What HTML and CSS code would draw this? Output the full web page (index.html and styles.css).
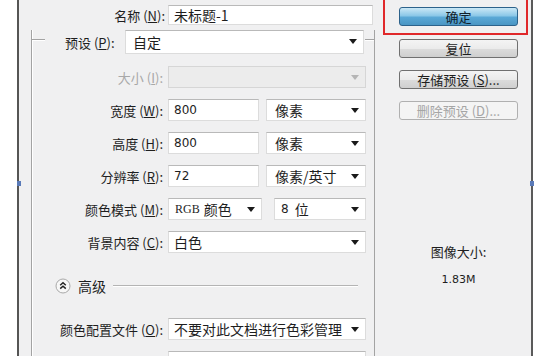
FILE: index.html
```html
<!DOCTYPE html>
<html lang="zh-CN">
<head>
  <meta charset="UTF-8">
  <title>新建</title>
  <link rel="stylesheet" href="styles.css">
</head>
<body>

  <div class="dialog">
    <span class="handle handle-left"></span>
    <span class="handle handle-right"></span>

    <div class="main">
      <div class="name-row">
        <label class="lbl name-lbl">名称 (<u>N</u>):</label>
        <div class="field name-field">未标题-1</div>
      </div>

      <div class="group">
        <div class="group-head">
          <span class="edge edge-left"></span>
          <label class="lbl preset-lbl">预设 (<u>P</u>):</label>
          <div class="field select preset-field">自定<i class="arrow"></i></div>
          <span class="edge edge-right"></span>
        </div>

        <div class="grid">
          <label class="lbl off">大小 (<u>I</u>):</label>
          <div class="field select disabled"><i class="arrow"></i></div>

          <label class="lbl">宽度 (<u>W</u>):</label>
          <div class="pair">
            <div class="field num">800</div>
            <div class="field select unit">像素<i class="arrow"></i></div>
          </div>

          <label class="lbl">高度 (<u>H</u>):</label>
          <div class="pair">
            <div class="field num">800</div>
            <div class="field select unit">像素<i class="arrow"></i></div>
          </div>

          <label class="lbl">分辨率 (<u>R</u>):</label>
          <div class="pair">
            <div class="field num">72</div>
            <div class="field select unit">像素/英寸<i class="arrow"></i></div>
          </div>

          <label class="lbl">颜色模式 (<u>M</u>):</label>
          <div class="pair">
            <div class="field select mode"><span class="rgb">RGB</span> 颜色<i class="arrow"></i></div>
            <div class="field select bits"><span class="digit">8</span> 位<i class="arrow"></i></div>
          </div>

          <label class="lbl">背景内容 (<u>C</u>):</label>
          <div class="field select">白色<i class="arrow"></i></div>
        </div>

        <div class="advanced">
          <svg class="toggle" width="16" height="16" viewBox="0 0 16 16">
            <circle cx="8" cy="8" r="7" fill="#f7f7f7" stroke="#a9a9a9"/>
            <path d="M5.2 7.2 L8 4.8 L10.8 7.2 M5.2 10.6 L8 8.2 L10.8 10.6" fill="none" stroke="#222" stroke-width="1.5"/>
          </svg>
          <span class="adv-text">高级</span>
          <span class="rule"></span>
        </div>

        <div class="grid">
          <label class="lbl">颜色配置文件 (<u>O</u>):</label>
          <div class="field select">不要对此文档进行色彩管理<i class="arrow"></i></div>

          <label class="lbl">像素长宽比 (<u>X</u>):</label>
          <div class="field select">方形像素<i class="arrow"></i></div>
        </div>
      </div>
    </div>

    <div class="side">
      <div class="highlight">
        <button class="btn btn-default">确定</button>
      </div>
      <button class="btn btn-reset">复位</button>
      <button class="btn">存储预设 (<u>S</u>)...</button>
      <button class="btn" disabled>删除预设 (<u>D</u>)...</button>

      <div class="size-info">
        <p class="size-title">图像大小:</p>
        <p class="size-value">1.83M</p>
      </div>
    </div>
  </div>

</body>
</html>
```

FILE: styles.css
```css
* {
  margin: 0;
  padding: 0;
  box-sizing: border-box;
}

body {
  width: 544px;
  height: 356px;
  overflow: hidden;
  background: #fff;
  font-family: "Noto Sans CJK SC", "Noto Sans", sans-serif;
  font-size: 13px;
  color: #1e1e1e;
}

u {
  text-decoration: underline;
  text-underline-offset: 1px;
}

.dialog {
  position: relative;
  display: flex;
  margin-left: 17px;
  width: 516px;
  height: 380px;
  background: #f0f0f1;
  border-left: 2px solid #555;
  border-right: 2px solid #5a5a5a;
}

/* selection handles on the frame */
.handle {
  position: absolute;
  top: 181px;
  width: 4px;
  height: 5px;
  background: #5a7ab8;
}

.handle-left { left: -2px; }
.handle-right { right: -3px; }

.main {
  width: 364px;
  padding: 5px 0 0 12px;
}

.lbl {
  white-space: nowrap;
  line-height: 1;
}

.lbl.off {
  color: #a8a8a8;
}

.field {
  position: relative;
  display: flex;
  align-items: center;
  height: 22px;
  padding-left: 5px;
  background: #fff;
  border: 1px solid #dcdcdc;
  border-top-color: #b9b9b9;
  font-size: 14px;
  white-space: nowrap;
}

.field.num {
  width: 91px;
  font-family: "DejaVu Sans", sans-serif;
  font-size: 12px;
}

.select {
  padding-right: 20px;
}

.arrow {
  position: absolute;
  right: 6px;
  top: 8px;
  width: 0;
  height: 0;
  border-left: 4px solid transparent;
  border-right: 4px solid transparent;
  border-top: 5px solid #1a1a1a;
}

.select.disabled {
  background: #ececec;
  border-color: #d6d6d6;
}

.select.disabled .arrow {
  border-top-color: #b5b5b5;
}

/* name */
.name-row {
  display: flex;
  align-items: center;
  gap: 3px;
}

.name-lbl {
  width: 134px;
  text-align: right;
}

.name-field {
  width: 205px;
  height: 20px;
}

/* preset group */
.group {
  width: 344px;
  margin-top: 14px;
  border-left: 1px solid #a3a3a3;
  border-right: 1px solid #a3a3a3;
  box-shadow: inset 1px 0 #fff;
}

.group-head {
  display: flex;
  align-items: center;
  margin-top: -9px;
}

.edge {
  align-self: flex-start;
  margin-top: 9px;
  height: 2px;
  border-top: 1px solid #a3a3a3;
  border-bottom: 1px solid #fff;
}

.edge-left {
  width: 13px;
}

.edge-right {
  flex: 1;
  margin-left: 1px;
}

.preset-lbl {
  margin-left: 20px;
  width: 60px;
}

.preset-field {
  width: 239px;
  height: 24px;
  padding-left: 7px;
}

.grid {
  display: grid;
  grid-template-columns: 131px 198px;
  column-gap: 5px;
  row-gap: 11px;
  align-items: center;
  margin-top: 12px;
}

.grid .lbl {
  text-align: right;
}

.pair {
  display: flex;
  justify-content: space-between;
}

.unit {
  width: 100px;
  padding-left: 8px;
}

.mode {
  width: 94px;
  padding-left: 6px;
}

.bits {
  width: 92px;
  padding-left: 6px;
}

.rgb {
  font-family: "Liberation Serif", serif;
  font-size: 12px;
  margin-right: 4px;
}

.digit {
  font-family: "DejaVu Sans", sans-serif;
  font-size: 12px;
  margin-right: 6px;
}

/* advanced toggle */
.advanced {
  display: flex;
  align-items: center;
  height: 16px;
  margin-top: 25px;
  padding-left: 23px;
}

.adv-text {
  margin-left: 7px;
  font-size: 14px;
}

.advanced .rule {
  width: 245px;
  margin-left: 7px;
  height: 2px;
  border-top: 1px solid #b4b4b4;
  border-bottom: 1px solid #fff;
}

.advanced + .grid {
  margin-top: 24px;
}

/* buttons column */
.side {
  width: 148px;
}

.highlight {
  width: 145px;
  margin-top: -10px;
  padding: 15px 8px 7px 14px;
  border: 2px solid #e0282b;
}

.btn {
  display: block;
  width: 119px;
  height: 19px;
  margin: 12px 0 0 16px;
  border: 1px solid #707070;
  border-radius: 3px;
  background: linear-gradient(#f4f4f4, #ebebeb 50%, #dcdcdc 51%, #cfcfcf);
  font-family: inherit;
  font-size: 13px;
  line-height: 17px;
  color: #1e1e1e;
}

.btn[disabled] {
  color: #a5a5a5;
  border-color: #b0b0b0;
  background: #f4f4f4;
}

.highlight .btn {
  margin: 0;
}

.btn-default {
  border-color: #2c628b;
  background: linear-gradient(#cbe8f6, #8cc8e8 45%, #5aa8d6 55%, #4a96c4);
  color: #10202c;
}

.btn-reset {
  margin-top: 4px;
}

.size-info {
  margin-top: 122px;
  padding-left: 16px;
  width: 135px;
  text-align: center;
}

.size-title {
  font-size: 13px;
}

.size-value {
  margin-top: 12px;
  font-family: "DejaVu Sans", sans-serif;
  font-size: 11px;
}
```
